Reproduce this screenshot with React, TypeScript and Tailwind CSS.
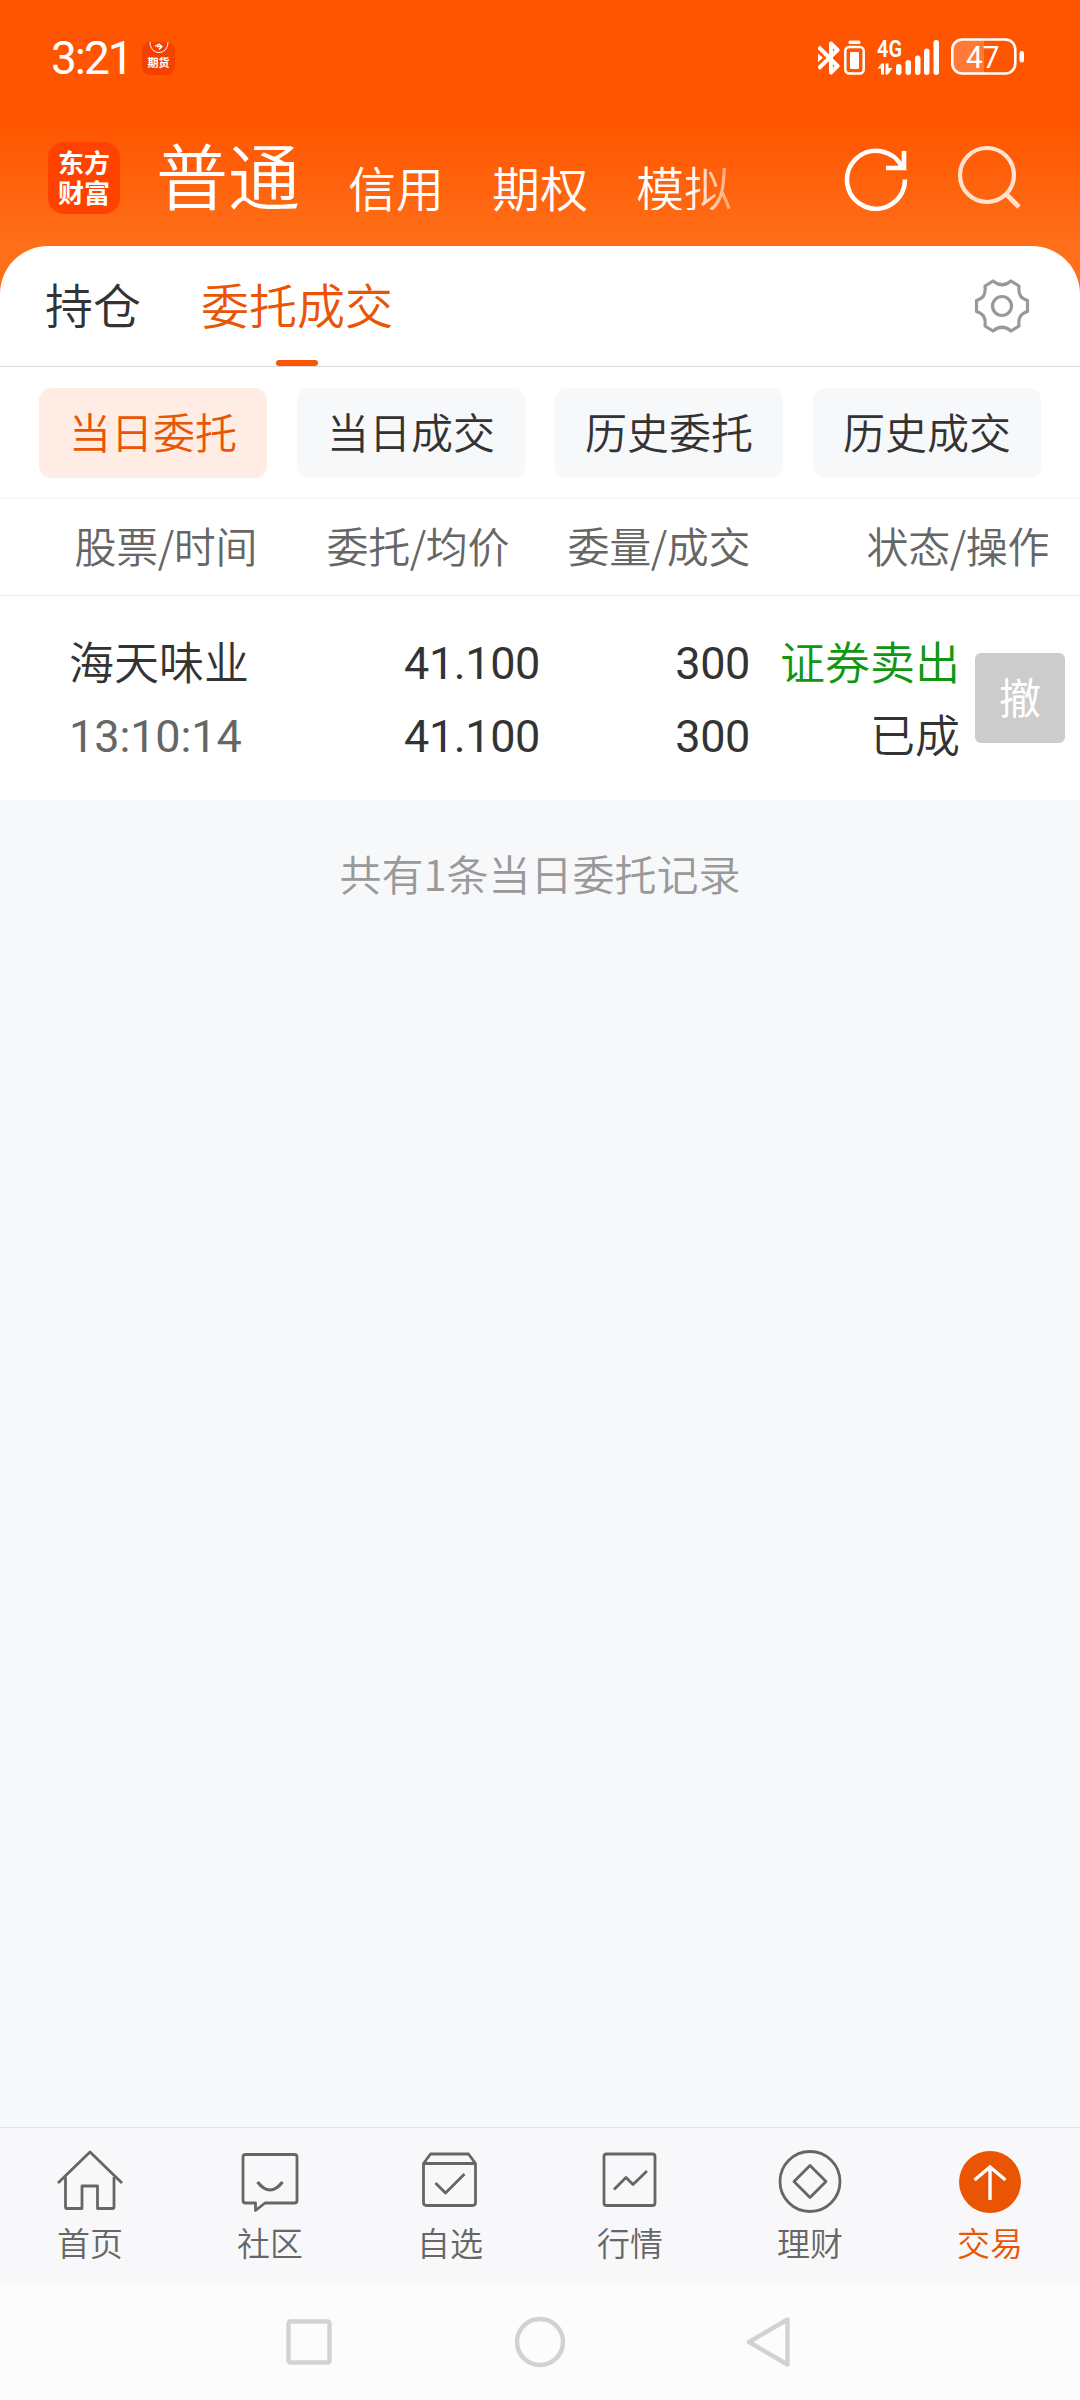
import type { ReactNode } from "react";

const cjk = "font-['Noto_Sans_CJK_SC','Noto_Sans',sans-serif]";
const num = "font-['Roboto','Noto_Sans_CJK_SC',sans-serif]";

const filters = ["当日委托", "当日成交", "历史委托", "历史成交"];

function BluetoothIcon() {
  return (
    <svg width="23" height="36" viewBox="0 0 23 36" fill="none" stroke="currentColor" strokeWidth="4" strokeLinejoin="round">
      <path d="M0.500 7 L19.500 26 L13 32.500 V3.500 L19.500 10 L0.500 28.500" />
      <path d="M0 13.500 L5 17.800 L0 22 Z" fill="currentColor" stroke="none" />
    </svg>
  );
}

function DeviceBatteryIcon() {
  return (
    <svg width="21" height="36" viewBox="0 0 21 36" fill="none">
      <rect x="4.500" y="0.500" width="12" height="3.500" rx="1.500" fill="currentColor" />
      <rect x="1.300" y="7" width="18.400" height="26.500" rx="4" stroke="currentColor" strokeWidth="2.500" />
      <rect x="6" y="12" width="9" height="17" rx="1" fill="currentColor" />
    </svg>
  );
}

function SignalIcon() {
  return (
    <svg width="64" height="36" viewBox="0 0 64 36" fill="currentColor" className="overflow-visible">
      <text x="0" y="17" fontSize="23" fontWeight="600" textLength="25" lengthAdjust="spacingAndGlyphs" fontFamily="Roboto, sans-serif">
        4G
      </text>
      <path d="M0.500 28.500 L4.500 23.500 H7 V34.500 H4 V28.500 Z" />
      <path d="M8.500 23.500 H11.500 V28 H15.500 L11 34.500 H8.500 Z" />
      <rect x="19" y="24" width="5.500" height="11" rx="2.700" />
      <rect x="28.500" y="20" width="5.500" height="15" rx="2.700" />
      <rect x="38" y="15.500" width="5.500" height="19.500" rx="2.700" />
      <rect x="47" y="8.500" width="5.500" height="26.500" rx="2.700" />
      <rect x="56.500" y="0" width="5.500" height="35" rx="2.700" />
    </svg>
  );
}

function BatteryIcon() {
  return (
    <svg width="74" height="40" viewBox="0 0 74 40" fill="none">
      <path d="M34 2 H13 Q3 2 3 12 V25 Q3 35 13 35 H34 Z" fill="#fff" fillOpacity="0.22" />
      <rect x="2.300" y="1.500" width="63" height="34" rx="10" stroke="currentColor" strokeWidth="2.600" />
      <rect x="69.500" y="13" width="4.500" height="11.500" rx="2" fill="currentColor" />
      <text x="16" y="29.500" fontSize="32" fontWeight="400" textLength="33.500" lengthAdjust="spacingAndGlyphs" fontFamily="Roboto, sans-serif" fill="currentColor">
        47
      </text>
    </svg>
  );
}

function StatusBar() {
  return (
    <div className="flex h-[116px] items-center justify-between pl-[51px] pr-[56px] text-white">
      <div className="flex items-center">
        <span className={`${num} w-[78px] text-[46px] leading-none tracking-[-2px]`}>3:21</span>
        <div className="ml-[13px] flex h-[33px] w-[33px] flex-col items-center overflow-hidden rounded-[8px] bg-[#f44100]">
          <svg width="20" height="12" viewBox="0 0 20 12" fill="none" stroke="#fff">
            <path d="M1 0 C1 14 19 14 19 0" />
            <path d="M6 4.500 L10 2 L13 4.500 L10 7.500 M8 4.500 H12" strokeWidth="1.300" />
          </svg>
          <span className={`${cjk} text-[11px] font-bold leading-[17px]`}>期货</span>
        </div>
      </div>
      <div className="flex items-center">
        <BluetoothIcon />
        <div className="ml-[3px]">
          <DeviceBatteryIcon />
        </div>
        <div className="ml-[12px]">
          <SignalIcon />
        </div>
        <div className="ml-[9px]">
          <BatteryIcon />
        </div>
      </div>
    </div>
  );
}

function Header() {
  return (
    <div className="flex h-[130px] items-start text-white">
      <div className={`${cjk} ml-[48px] mt-[26px] h-[72px] w-[72px] rounded-[16px] bg-[#ff4200] pt-[5px] text-center text-[26px] font-bold leading-[30px]`}>
        东方
        <br />
        财富
      </div>
      <span className={`${cjk} ml-[36px] mt-[21px] text-[72px] font-[350] leading-[72px]`}>普通</span>
      <div className={`${cjk} ml-[48px] mt-[46px] flex w-[392px] gap-[48px] text-[48px] font-[350] leading-[48px]`}>
        <span>信用</span>
        <span>期权</span>
        <span className="bg-gradient-to-r from-white from-55% to-white/40 bg-clip-text text-transparent">模拟</span>
      </div>
      <svg width="66" height="66" viewBox="0 0 66 66" fill="none" stroke="currentColor" strokeWidth="4.600" className="ml-[104px] mt-[30px]">
        <path d="M61 33.500 A29 29 0 1 1 58.500 22" />
        <path d="M60 5 V22 H42" />
      </svg>
      <svg width="66" height="66" viewBox="0 0 66 66" fill="none" stroke="#ffe3d2" strokeWidth="4.200" className="ml-[46px] mt-[28px]">
        <circle cx="31" cy="31" r="27" />
        <path d="M50 50 L63 63" strokeWidth="4.800" />
      </svg>
    </div>
  );
}

function GearIcon() {
  return (
    <svg width="56" height="56" viewBox="-28 -28 56 56" fill="none" stroke="#999" strokeWidth="3.200" strokeLinejoin="round">
      <path d="M-9 -25 Q0 -17.500 9 -25 L17 -20 C16 -11 19 -7.500 25.500 -5.500 V5.500 C19 7.500 16 11 17 20 L9 25 Q0 17.500 -9 25 L-17 20 C-16 11 -19 7.500 -25.500 5.500 V-5.500 C-19 -7.500 -16 -11 -17 -20 Z" />
      <circle r="9.500" />
    </svg>
  );
}

function Tabs() {
  return (
    <div className={`${cjk} flex h-[121px] items-start border-b border-[#dcdcdc] pl-[45px] text-[48px] font-[350] leading-[48px]`}>
      <span className="mt-[33px] text-[#333]">持仓</span>
      <div className="relative ml-[60px] h-[120px] pt-[33px] text-[#ea5504]">
        委托成交
        <span className="absolute bottom-0 left-[75px] h-[6px] w-[42px] rounded-[3px] bg-[#fa5605]" />
      </div>
      <div className="ml-auto mr-[50px] mt-[32px]">
        <GearIcon />
      </div>
    </div>
  );
}

function Filters() {
  return (
    <div className={`${cjk} flex h-[132px] gap-[30px] border-b border-[#f5f5f5] px-[39px] pt-[21px] text-[42px] font-[350]`}>
      {filters.map((label, i) => (
        <button
          key={label}
          className={`flex h-[90px] w-[228px] items-center justify-center rounded-[12px] pb-[5px] ${
            i === 0 ? "bg-[#ffede5] text-[#ea5504]" : "bg-[#f7f8fa] text-[#333]"
          }`}
        >
          {label}
        </button>
      ))}
    </div>
  );
}

function TableHead() {
  return (
    <div className={`${cjk} flex h-[97px] items-center border-b border-[#ececec] pb-[5px] text-[42px] font-[350] tracking-[-0.400px] text-[#666]`}>
      <span className="w-[257px] text-right">股票/时间</span>
      <span className="w-[252px] text-right">委托/均价</span>
      <span className="w-[241px] text-right">委量/成交</span>
      <span className="w-[299px] text-right">状态/操作</span>
    </div>
  );
}

function OrderRow() {
  return (
    <div className="flex h-[204px] text-[45px] font-[350] leading-[73px] text-[#333]">
      <div className="flex w-[250px] flex-col pl-[69px] pt-[28px]">
        <span className={cjk}>海天味业</span>
        <span className={`${num} mt-[3px] whitespace-nowrap font-normal tracking-[-0.100px] text-[#666]`}>13:10:14</span>
      </div>
      <div className={`${num} flex w-[290px] flex-col pt-[31px] text-right font-normal tracking-[-0.400px]`}>
        <span>41.100</span>
        <span>41.100</span>
      </div>
      <div className={`${num} flex w-[210px] flex-col pt-[31px] text-right font-normal tracking-[-0.400px]`}>
        <span>300</span>
        <span>300</span>
      </div>
      <div className={`${cjk} flex w-[210px] flex-col pt-[28px] text-right`}>
        <span className="text-[#109610]">证券卖出</span>
        <span>已成</span>
      </div>
      <button className={`${cjk} ml-[15px] mt-[57px] h-[90px] w-[90px] rounded-[6px] bg-[#ccc] pb-[5px] text-[42px] font-normal leading-[84px] text-white`}>
        撤
      </button>
    </div>
  );
}

function NavItem({ label, active, children }: { label: string; active?: boolean; children: ReactNode }) {
  return (
    <div className={`flex w-[180px] flex-col items-center pt-[20px] ${active ? "text-[#ea5504]" : "text-[#666]"}`}>
      <svg width="68" height="68" viewBox="-34 -34 68 68" fill="none" stroke="currentColor" strokeWidth="2.800" strokeLinejoin="round">
        {children}
      </svg>
      <span className={`${cjk} mt-[10px] text-[33px] font-[350] leading-[33px]`}>{label}</span>
    </div>
  );
}

function BottomNav() {
  return (
    <nav className="flex h-[157px] border-t border-[#e2e2e4] bg-[#f8f8fa]">
      <NavItem label="首页">
        <path d="M-32 1 L0 -30 L32 1" />
        <path d="M-24.500 -5 V25 Q-24.500 26.500 -23 26.500 H-8 V4 H7.500 V26.500 H22.500 Q24 26.500 24 25 V-5" />
      </NavItem>
      <NavItem label="社区">
        <path d="M-24.500 -27.500 H24.500 Q27 -27.500 27 -25 V18.500 Q27 21 24.500 21 H-5 L-14.500 28.500 V21 H-24.500 Q-27 21 -27 18.500 V-25 Q-27 -27.500 -24.500 -27.500 Z" />
        <path d="M-12.500 0 Q0 16 12.500 0" strokeWidth="3.200" />
      </NavItem>
      <NavItem label="自选">
        <path d="M-26.500 -18.500 L-19.500 -28 H18.500 L25.500 -18.500 V20.500 Q25.500 23.500 22.500 23.500 H-23.500 Q-26.500 23.500 -26.500 20.500 Z M-26.500 -18.500 H25.500" />
        <path d="M-14.500 1 L-4.500 11 L14.500 -8" />
      </NavItem>
      <NavItem label="行情">
        <rect x="-26" y="-28" width="51" height="51.500" rx="2.500" />
        <path d="M-16 7.500 L-4 -4.500 L3 2.500 L17 -11" />
      </NavItem>
      <NavItem label="理财">
        <circle cy="-0.500" r="30" />
        <path d="M0 -16.500 L16 -0.500 L0 15.500 L-16 -0.500 Z" />
      </NavItem>
      <NavItem label="交易" active>
        <circle r="31" fill="currentColor" stroke="none" />
        <path d="M-15.500 -2 L0 -15 L15.500 -2 M0 -15 V18" stroke="#fff" strokeWidth="3.400" strokeLinejoin="miter" />
      </NavItem>
    </nav>
  );
}

function SystemNav() {
  return (
    <div className="flex h-[116px] items-center bg-[#fcfcfc] pl-[283px] text-[#d2d2d2]">
      <svg width="52" height="52" viewBox="0 0 52 52" fill="none" stroke="currentColor" strokeWidth="4.500">
        <rect x="5.500" y="5.500" width="41" height="41" rx="2" />
      </svg>
      <svg width="52" height="52" viewBox="0 0 52 52" fill="none" stroke="currentColor" strokeWidth="4.500" className="ml-[179px]">
        <circle cx="26" cy="26" r="23" />
      </svg>
      <svg width="52" height="52" viewBox="0 0 52 52" fill="none" stroke="currentColor" strokeWidth="4.500" strokeLinejoin="round" className="ml-[177px]">
        <path d="M6 26 L44.500 3.500 V48.500 Z" />
      </svg>
    </div>
  );
}

export default function App() {
  return (
    <div className="flex h-[2400px] w-[1080px] flex-col bg-[#f7f8fa]">
      <div className="bg-[linear-gradient(to_bottom,#ff5500_0px,#ff5500_120px,#ff6e18_240px,#ff6e18_300px)]">
        <StatusBar />
        <Header />
        <div className="rounded-t-[48px] bg-white">
          <Tabs />
          <Filters />
          <TableHead />
          <OrderRow />
        </div>
      </div>
      <p className={`${cjk} mt-[43px] text-center text-[42px] font-[350] leading-[60px] text-[#999]`}>共有1条当日委托记录</p>
      <div className="flex-1" />
      <BottomNav />
      <SystemNav />
    </div>
  );
}
